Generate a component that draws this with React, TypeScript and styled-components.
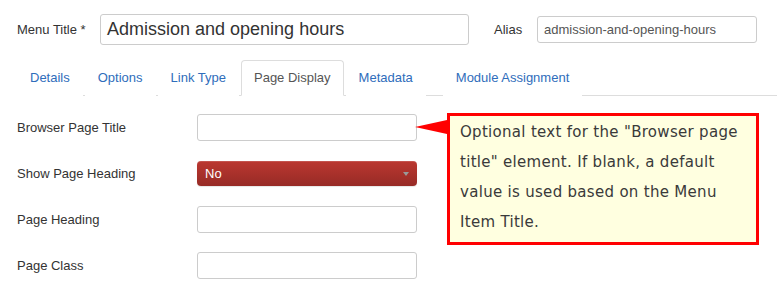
import React from 'react';
import styled, { createGlobalStyle } from 'styled-components';

const GlobalStyle = createGlobalStyle`
  html, body {
    margin: 0;
    padding: 0;
    background: #fff;
  }
  body {
    font-family: "Liberation Sans", Arial, sans-serif;
    font-size: 13px;
    color: #333;
  }
`;

const Page = styled.div`
  position: relative;
  width: 777px;
  height: 291px;
  overflow: hidden;
  padding-left: 17px;
  box-sizing: border-box;
`;

const TitleRow = styled.div`
  display: flex;
  align-items: center;
  padding-top: 14px;
  height: 31px;
`;

const TopLabel = styled.label<{ $width: number }>`
  width: ${({ $width }) => $width}px;
  flex: 0 0 auto;
  line-height: 18px;
`;

const TitleInput = styled.div`
  width: 369px;
  height: 31px;
  box-sizing: border-box;
  border: 1px solid #ccc;
  border-radius: 3px;
  padding: 0 6px;
  font-size: 18px;
  line-height: 29px;
  color: #333;
  margin-right: 25px;
`;

const AliasInput = styled.div`
  width: 220px;
  height: 27px;
  box-sizing: border-box;
  border: 1px solid #ccc;
  border-radius: 3px;
  padding: 0 6px;
  line-height: 25px;
  color: #555;
`;

const Tabs = styled.ul`
  list-style: none;
  display: flex;
  margin: 15px 0 0;
  padding: 0;
  border-bottom: 1px solid #ddd;
`;

const Tab = styled.li<{ $active?: boolean; $gap?: number }>`
  margin-right: 2px;
  margin-left: ${({ $gap }) => $gap || 0}px;
  margin-bottom: -1px;
  padding: 0 12px;
  line-height: 34px;
  border: 1px solid ${({ $active }) => ($active ? '#ddd' : 'transparent')};
  border-bottom-color: ${({ $active }) => ($active ? '#fff' : 'transparent')};
  border-radius: 4px 4px 0 0;
  background: #fff;
  color: ${({ $active }) => ($active ? '#555' : '#2f6dbb')};
  white-space: nowrap;
`;

const Form = styled.div`
  padding-top: 18px;
  display: flex;
  flex-direction: column;
  gap: 19px;
`;

const Row = styled.div`
  display: flex;
  align-items: center;
  height: 27px;
`;

const Label = styled.label`
  width: 180px;
  flex: 0 0 auto;
`;

const TextInput = styled.div`
  width: 220px;
  height: 27px;
  box-sizing: border-box;
  border: 1px solid #ccc;
  border-radius: 3px;
  background: #fff;
`;

const Select = styled.div`
  position: relative;
  width: 220px;
  height: 25px;
  box-sizing: border-box;
  border-radius: 4px;
  padding: 0 8px;
  line-height: 25px;
  color: #fff;
  background: linear-gradient(#bb3730, #972b26);
  box-shadow: inset 0 1px 0 rgba(255, 255, 255, 0.15), 0 1px 1px rgba(0, 0, 0, 0.1);

  &::after {
    content: '';
    position: absolute;
    right: 8px;
    top: 11px;
    border-left: 3.5px solid transparent;
    border-right: 3.5px solid transparent;
    border-top: 4px solid #999;
  }
`;

const Callout = styled.div`
  position: absolute;
  left: 447px;
  top: 113px;
  width: 312px;
  height: 132px;
  box-sizing: border-box;
  border: 3px solid #ff0000;
  background: #ffffe0;
  padding: 1px 8px 0 10px;
  font-family: "DejaVu Sans", sans-serif;
  font-size: 15px;
  letter-spacing: 0.3px;
  line-height: 30px;
  color: #3a3a3a;

  &::before {
    content: '';
    position: absolute;
    left: -35px;
    top: 4px;
    border-top: 7.5px solid transparent;
    border-bottom: 7.5px solid transparent;
    border-right: 32px solid #ff0000;
  }
`;

const tabs = ['Details', 'Options', 'Link Type', 'Page Display', 'Metadata', 'Module Assignment'];

export default function App() {
  return (
    <Page>
      <GlobalStyle />
      <TitleRow>
        <TopLabel $width={83}>Menu Title *</TopLabel>
        <TitleInput>Admission and opening hours</TitleInput>
        <TopLabel $width={43}>Alias</TopLabel>
        <AliasInput>admission-and-opening-hours</AliasInput>
      </TitleRow>
      <Tabs>
        {tabs.map((t) => (
          <Tab key={t} $active={t === 'Page Display'} $gap={t === 'Module Assignment' ? 15 : 0}>
            {t}
          </Tab>
        ))}
      </Tabs>
      <Form>
        <Row>
          <Label>Browser Page Title</Label>
          <TextInput />
        </Row>
        <Row>
          <Label>Show Page Heading</Label>
          <Select>No</Select>
        </Row>
        <Row>
          <Label>Page Heading</Label>
          <TextInput />
        </Row>
        <Row>
          <Label>Page Class</Label>
          <TextInput />
        </Row>
      </Form>
      <Callout>
        Optional text for the "Browser page title" element. If blank, a default value is used based
        on the Menu Item Title.
      </Callout>
    </Page>
  );
}
